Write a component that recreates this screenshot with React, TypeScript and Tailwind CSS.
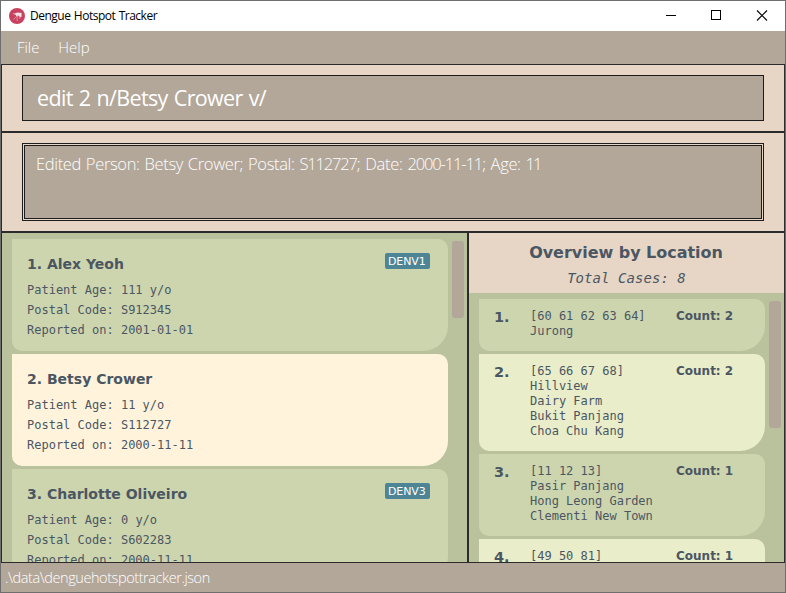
import React from 'react';

type Person = { id: number; name: string; age: number; postal: string; date: string; tag?: string; selected?: boolean };
type Place = { id: number; sectors: string; names: string[]; count: number };

const people: Person[] = [
  { id: 1, name: 'Alex Yeoh', age: 111, postal: 'S912345', date: '2001-01-01', tag: 'DENV1' },
  { id: 2, name: 'Betsy Crower', age: 11, postal: 'S112727', date: '2000-11-11', selected: true },
  { id: 3, name: 'Charlotte Oliveiro', age: 0, postal: 'S602283', date: '2000-11-11', tag: 'DENV3' },
];

const places: Place[] = [
  { id: 1, sectors: '[60 61 62 63 64]', names: ['Jurong'], count: 2 },
  { id: 2, sectors: '[65 66 67 68]', names: ['Hillview', 'Dairy Farm', 'Bukit Panjang', 'Choa Chu Kang'], count: 2 },
  { id: 3, sectors: '[11 12 13]', names: ['Pasir Panjang', 'Hong Leong Garden', 'Clementi New Town'], count: 1 },
  { id: 4, sectors: '[49 50 81]', names: [], count: 1 },
];

function PersonCard({ p }: { p: Person }) {
  return (
    <div
      className={`flex h-28 shrink-0 items-start justify-between rounded-tr-[10px] rounded-br-[25px] rounded-bl-[10px] pl-[15px] pr-[18px] pt-[14px] ${
        p.selected ? 'bg-[#fff4db]' : 'bg-[#cdd5ae]'
      }`}
    >
      <div>
        <div className="mb-[7px] h-5 font-['DejaVu_Sans',sans-serif] text-[14px] font-bold leading-[22px]">
          {p.id}. {p.name}
        </div>
        <div className="font-['DejaVu_Sans_Mono',monospace] text-[12px] leading-5">
          <div>Patient Age: {p.age} y/o</div>
          <div>Postal Code: {p.postal}</div>
          <div>Reported on: {p.date}</div>
        </div>
      </div>
      {p.tag && (
        <span className="h-4 w-[45px] rounded-[2px] bg-[#4d8496] pl-[3px] font-['DejaVu_Sans',sans-serif] text-[11px] leading-[17px] tracking-[-0.1px] text-white">
          {p.tag}
        </span>
      )}
    </div>
  );
}

function PlaceCard({ p }: { p: Place }) {
  return (
    <div
      className={`flex shrink-0 rounded-tr-[10px] rounded-br-[25px] rounded-bl-[10px] pb-3 pl-[15px] pt-[10px] leading-[15px] ${
        p.id % 2 ? 'bg-[#cdd5ae]' : 'bg-[#e9edc9]'
      } ${p.names.length ? '' : 'min-h-[67px]'}`}
    >
      <div className="h-[15px] w-9 font-['DejaVu_Sans',sans-serif] text-[14.500px] font-bold leading-4">{p.id}.</div>
      <div className="w-[146px] whitespace-pre font-['DejaVu_Sans_Mono',monospace] text-[12px]">
        <div>{p.sectors}</div>
        {p.names.map((n) => (
          <div key={n}>{n}</div>
        ))}
      </div>
      <div className="whitespace-nowrap font-['DejaVu_Sans',sans-serif] text-[12px] font-bold">Count: {p.count}</div>
    </div>
  );
}

export default function App() {
  return (
    <div className="flex h-[593px] w-[786px] flex-col overflow-hidden border border-[#6e6e6e] bg-[#b3a79a] font-['Open_Sans',sans-serif] text-[#4b5663]">
      <header className="flex h-[30px] shrink-0 items-center bg-white pl-2">
        <svg width="16" height="16" viewBox="0 0 16 16">
          <circle cx="8" cy="8" r="8" fill="#c8415f" />
          <path d="M3.300 5.800 6 5.600 8 4.600l4.800.5-.4 1.500.3 1.900-1.500.8L9.500 7.600l-2 .7-.8-1.500Z" fill="#f6e6ea" />
          <path d="M8 8 6.200 9.700 4.500 11.500M8.800 8 8 10.600l.3 2.600M10.500 8l.4 2.800" fill="none" stroke="#e3a0af" strokeWidth=".8" />
        </svg>
        <span className="ml-[5px] text-[12px] leading-[30px] tracking-[-0.5px] text-black [word-spacing:0.8px]">Dengue Hotspot Tracker</span>
        <svg className="ml-auto" width="138" height="30" viewBox="0 0 138 30" fill="none" stroke="#000">
          <path d="M19 14.500h10M64.500 9.500h9v9h-9Z" shapeRendering="crispEdges" />
          <path d="m110 9.500 10 10m0-10-10 10" strokeWidth="1.100" />
        </svg>
      </header>

      <nav className="flex h-[33px] shrink-0 items-center gap-[19px] pl-4 text-[15px] font-light tracking-[-0.05px] text-white">
        <span>File</span>
        <span>Help</span>
      </nav>

      <section className="h-[68px] shrink-0 border border-[#2b2b2b] bg-[#e7d6c6] px-5 pt-[10px]">
        <div className="flex h-[46px] items-center border border-[#1d1d1d] bg-[#b3a79a] pl-[14px] text-[21.500px] tracking-[-0.66px] text-white [word-spacing:1.200px]">
          edit 2 n/Betsy Crower v/
        </div>
      </section>

      <section className="h-[100px] shrink-0 border border-[#2b2b2b] bg-[#e7d6c6] px-5 pt-[10px]">
        <div className="h-[78px] border border-[#1d1d1d] p-px">
          <div className="h-full border border-[#1d1d1d] bg-[#b3a79a] pl-[11px] pt-[6px] text-[16.500px] font-light leading-6 tracking-[-0.34px] text-white [word-spacing:0.9px]">
            Edited Person: Betsy Crower; Postal: <span className="tracking-[-1.150px]">S112727</span>; Date:{' '}
            <span className="tracking-[-1.120px]">2000-11-11</span>; Age: <span className="tracking-[-2px]">11</span>
          </div>
        </div>
      </section>

      <main className="flex h-[331px] shrink-0">
        <section className="flex w-[467px] gap-1 overflow-hidden border border-[#2b2b2b] bg-[#b9c29d] pl-[10px] pt-[6px]">
          <div className="flex w-[436px] flex-col gap-[3px]">
            {people.map((p) => (
              <PersonCard key={p.id} p={p} />
            ))}
          </div>
          <div className="mt-[2px] h-[77px] w-3 rounded-[3px] bg-[#b3a79a]" />
        </section>
        <section className="flex w-[317px] flex-col overflow-hidden border border-[#2b2b2b] bg-[#b9c29d]">
          <div className="h-[60px] shrink-0 bg-[#e7d6c6] pt-[9px] text-center">
            <div className="pr-px font-['DejaVu_Sans',sans-serif] text-[16px] font-bold leading-[22px] tracking-[-0.03px]">Overview by Location</div>
            <div className="font-['DejaVu_Sans_Mono',monospace] text-[14px] italic leading-7 tracking-[0.05px]">Total Cases: 8</div>
          </div>
          <div className="flex min-h-0 flex-1 gap-1 pl-[10px] pt-[6px]">
            <div className="flex w-[286px] flex-col gap-[3px]">
              {places.map((p) => (
                <PlaceCard key={p.id} p={p} />
              ))}
            </div>
            <div className="mt-[2px] h-[127px] w-3 rounded-[3px] bg-[#b3a79a]" />
          </div>
        </section>
      </main>

      <footer className="flex-1 pl-1 text-[14.500px] font-light leading-[29px] tracking-[-0.42px] text-white">.\data\denguehotspottracker.json</footer>
    </div>
  );
}
